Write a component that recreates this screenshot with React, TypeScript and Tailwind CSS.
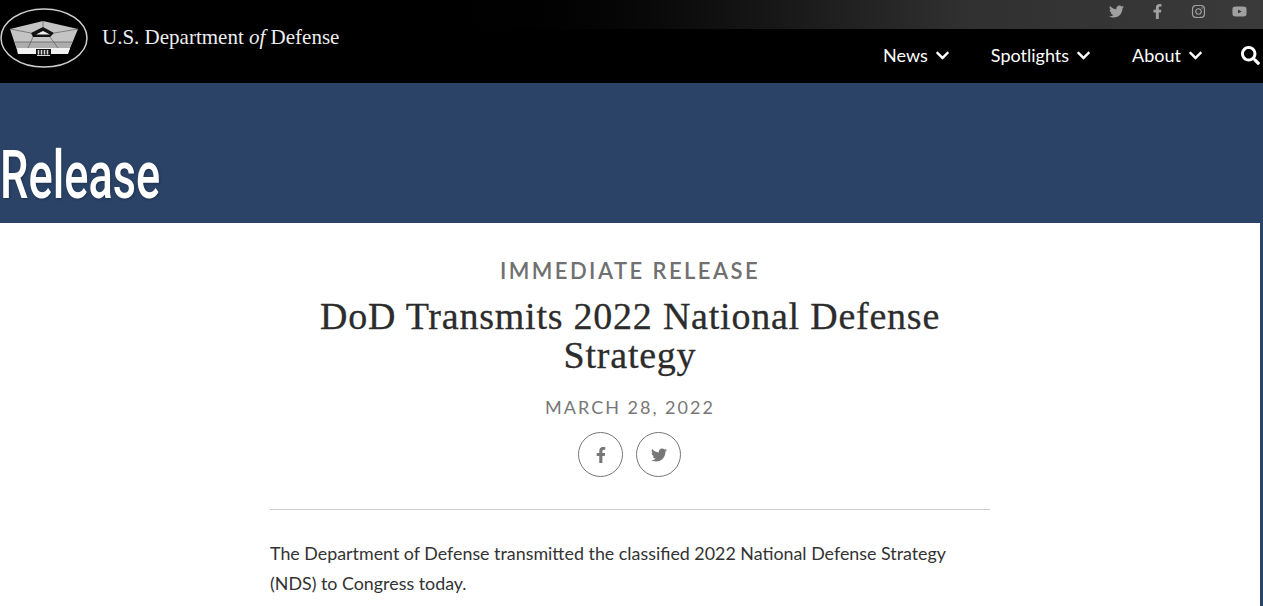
import { FaChevronDown, FaFacebookF, FaInstagram, FaSearch, FaTwitter, FaYoutube } from "react-icons/fa";

const navItems = ["News", "Spotlights", "About"];
const socialIcons = [FaTwitter, FaFacebookF, FaInstagram, FaYoutube];

// Pentagon seal
const Seal = () => (
  <svg width="90" height="62" viewBox="0 0 90 62" className="shrink-0">
    <ellipse cx="44" cy="31" rx="43" ry="29" fill="none" stroke="#cfcfcf" strokeWidth="1.5" />
    <path d="M43 14 L78 22 L68 46 H18 L10 22 Z" fill="#c4c4c4" />
    <path d="M15 35 H72 L68 46 H18 Z" fill="#adadad" />
    <path d="M17 41 H70 L68 47 H18 Z" fill="#f2f2f2" />
    <path d="M43 20 L54 26 L50 30 H33 L31 26 Z" fill="#111" />
    <path d="M36 27.5 L43 24 L50 27.5 Z" fill="#efefef" />
    <path d="M43 14 V20 M10 22 L31 26 M78 22 L54 26 M33 30 L28 41 M50 30 L58 41 M15 35 H72" stroke="#4a4a4a" strokeWidth="0.6" fill="none" />
    <path d="M36 42 H51 V49 H36 Z" fill="#111" />
    <path d="M38.5 43 V47.5 M41.5 43 V47.5 M44.5 43 V47.5 M47.5 43 V47.5" stroke="#d8d8d8" strokeWidth="1.5" />
    <path d="M37 48.5 H50" stroke="#d8d8d8" strokeWidth="1" />
  </svg>
);

export default function App() {
  return (
    <div className="h-[606px] overflow-hidden bg-[#2a4367] font-['Lato',sans-serif]">
      <header className="flex h-[83px] bg-black">
        <div className="flex items-center pb-[8px] w-[400px] shrink-0">
          <Seal />
          <span className="ml-[12px] text-[21px] text-[#ededed] font-['Liberation_Serif',serif] whitespace-nowrap">
            U.S. Department <em>of</em> Defense
          </span>
        </div>
        <div className="flex flex-col flex-1">
          <div className="flex items-center justify-end h-[29px] pr-[3px] pb-[6px] text-[#a0a0a0] text-[15px] bg-gradient-to-r from-black via-[#303030] via-65% to-[#3a3a3a]">
            {socialIcons.map((Icon, i) => (
              <span key={i} className="flex justify-center w-[41px]">
                <Icon />
              </span>
            ))}
          </div>
          <nav className="flex flex-1 items-center justify-end pr-[3px] pb-[2px] text-white text-[18px]">
            {navItems.map((item, i) => (
              <a key={item} className={`flex items-center gap-[7px] ${i === 2 ? "mr-[38px]" : "mr-[41px]"}`}>
                {item}
                <FaChevronDown className="text-[15px] mt-[1px]" />
              </a>
            ))}
            <FaSearch className="text-[19px]" />
          </nav>
        </div>
      </header>

      <div className="flex items-center h-[140px] pt-[44px]">
        <h1 className="inline-block origin-left scale-x-[0.685] text-white text-[66px] font-medium font-['Roboto',sans-serif] [text-shadow:1px_1px_3px_rgba(0,0,0,0.3)]">
          Release
        </h1>
      </div>

      <main className="w-[1260px] h-full bg-white">
        <div className="w-[720px] mx-auto pt-[33px] text-center">
          <p className="text-[22px] leading-[30px] font-semibold tracking-[2.45px] text-[#707070]">IMMEDIATE RELEASE</p>
          <h2 className="mt-[11px] text-[38px] leading-[39px] tracking-[0.77px] text-[#2c2c2c] font-['Liberation_Serif',serif] [-webkit-text-stroke:0.3px_#2c2c2c]">
            DoD Transmits 2022 National Defense Strategy
          </h2>
          <p className="mt-[19px] text-[18px] leading-[26px] tracking-[2px] text-[#777]">MARCH 28, 2022</p>
          <div className="flex justify-center gap-[13px] mt-[12px] pr-[1px]">
            <span className="flex items-center justify-center w-[45px] h-[45px] rounded-full border border-[#777] text-[#777] text-[16px]">
              <FaFacebookF />
            </span>
            <span className="flex items-center justify-center w-[45px] h-[45px] rounded-full border border-[#777] text-[#777] text-[16px]">
              <FaTwitter />
            </span>
          </div>
          <hr className="mt-[32px] border-[#ccc]" />
          <p className="mt-[28px] text-left text-[17.85px] leading-[30px] text-[#333]">
            The Department of Defense transmitted the classified 2022 National Defense Strategy (NDS) to Congress today.
          </p>
        </div>
      </main>
    </div>
  );
}
